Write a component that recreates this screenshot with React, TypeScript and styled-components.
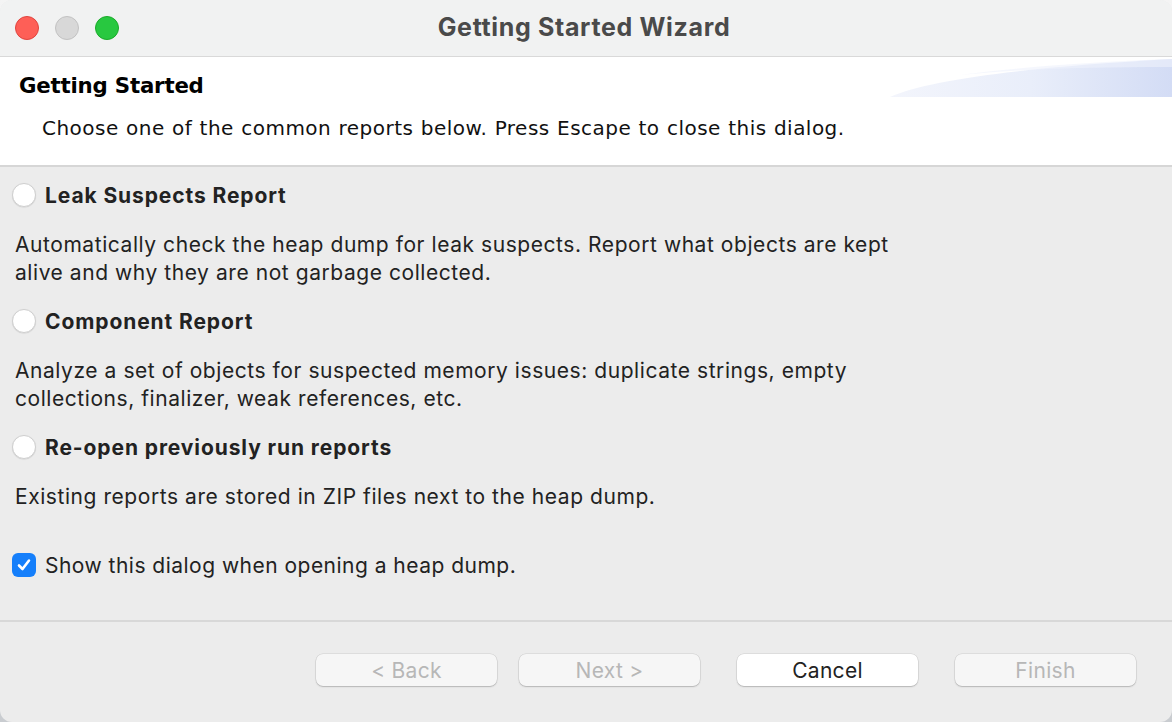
import React from "react";
import styled, { createGlobalStyle } from "styled-components";

const Global = createGlobalStyle`
  html, body { margin: 0; padding: 0; }
  body {
    width: 1172px; height: 722px; overflow: hidden;
    background: linear-gradient(180deg, #f4f4f4 0%, #c9ccd0 100%);
    font-family: Inter, "Open Sans", sans-serif;
  }
`;

const Window = styled.div`
  width: 1172px; height: 722px; box-sizing: border-box;
  border-radius: 12px; overflow: hidden;
  background: #ececec;
  display: flex; flex-direction: column;
`;

const TitleBar = styled.div`
  height: 57px; flex: none; position: relative; box-sizing: border-box;
  background: #f1f2f2; border-bottom: 1px solid #d9d9d9;
  display: flex; align-items: center; justify-content: center;
`;

const Lights = styled.div`
  position: absolute; left: 15px; top: 16px;
  display: flex; gap: 16px;
`;

const Light = styled.span<{ $c: string; $b: string }>`
  width: 24px; height: 24px; border-radius: 50%; box-sizing: border-box;
  background: ${p => p.$c}; border: 1px solid ${p => p.$b};
`;

const Title = styled.div`
  font-size: 25px; font-weight: 700; color: #4a4a4a; letter-spacing: 0.65px;
  margin-top: -2px; margin-left: -4px;
`;

const Header = styled.div`
  height: 110px; flex: none; position: relative; background: #fff;
  border-bottom: 2px solid #d6d6d6; box-sizing: border-box;
  padding: 15px 0 0 19px;
`;

const Banner = styled.svg`
  position: absolute; right: 0; top: 0;
`;

const HeaderTitle = styled.div`
  font-family: "DejaVu Sans", sans-serif; font-weight: 700;
  font-size: 21.3px; color: #000; line-height: 28px; letter-spacing: -0.2px;
`;

const HeaderDesc = styled.div`
  margin: 16px 0 0 23px; font-family: "DejaVu Sans", sans-serif;
  font-size: 20px; color: #111; line-height: 24px; letter-spacing: 0.48px;
  word-spacing: 0.5px;
`;

const Body = styled.div`
  flex: 1; padding: 13px 0 0 12px; display: flex; flex-direction: column;
`;

const Option = styled.label`
  display: flex; align-items: center; gap: 9px; height: 30px;
  font-size: 21px; font-weight: 700; color: #222; letter-spacing: 0.9px;
`;

const Radio = styled.span`
  width: 24px; height: 24px; border-radius: 50%; box-sizing: border-box;
  background: #fff; border: 1px solid #cfcfcf;
  box-shadow: 0 0.5px 1px rgba(0,0,0,0.12);
`;

const Desc = styled.p`
  margin: 21px 0 19px 3px; font-size: 21px; line-height: 28px; color: #222;
  letter-spacing: 0.56px; max-width: 900px;
`;

const Check = styled.span`
  width: 24px; height: 24px; border-radius: 6px; background: #157ffb;
  display: flex; align-items: center; justify-content: center;
`;

const CheckRow = styled.label`
  display: flex; align-items: center; gap: 9px; height: 30px; margin-top: 20px;
  font-size: 21px; color: #222; letter-spacing: 0.48px;
`;

const Footer = styled.div`
  height: 102px; flex: none; border-top: 2px solid #d8d8d8;
  display: flex; align-items: flex-start; padding: 32px 0 0 316px; box-sizing: border-box;
`;

const Button = styled.button<{ $enabled?: boolean; $gap: number }>`
  width: 181px; height: 32px; margin-right: ${p => p.$gap}px;
  border-radius: 7px; border: none;
  background: ${p => (p.$enabled ? "#ffffff" : "#f6f6f6")};
  box-shadow: 0 0 0 0.5px rgba(0,0,0,0.12), 0 1px 1.5px rgba(0,0,0,0.18);
  color: ${p => (p.$enabled ? "#222" : "#b7b7b7")};
  font-family: Inter, "Open Sans", sans-serif; font-size: 21px; padding: 0;
  letter-spacing: 0.3px;
`;

export default function App() {
  return (
    <>
      <Global />
      <Window>
        <TitleBar>
          <Lights>
            <Light $c="#fe5f57" $b="#e0443e" />
            <Light $c="#d8d8d8" $b="#c2c2c2" />
            <Light $c="#28c840" $b="#1aab29" />
          </Lights>
          <Title>Getting Started Wizard</Title>
        </TitleBar>
        <Header>
          <Banner width="282" height="40" viewBox="0 0 282 40">
            <defs>
              <linearGradient id="bg" x1="0" x2="1" y1="0" y2="0">
                <stop offset="0" stopColor="#f3f5fc" />
                <stop offset="0.5" stopColor="#e9eefa" />
                <stop offset="1" stopColor="#d3dcf5" />
              </linearGradient>
            </defs>
            <path d="M0 40 C40 22 140 10 282 2 L282 40 Z" fill="url(#bg)" />
            <path d="M70 18 C130 12 200 10 282 10 L282 2 C200 5 130 10 70 18 Z" fill="#eef2fb" opacity="0.6" />
          </Banner>
          <HeaderTitle>Getting Started</HeaderTitle>
          <HeaderDesc>Choose one of the common reports below. Press Escape to close this dialog.</HeaderDesc>
        </Header>
        <Body>
          <Option><Radio />Leak Suspects Report</Option>
          <Desc>Automatically check the heap dump for leak suspects. Report what objects are kept alive and why they are not garbage collected.</Desc>
          <Option><Radio />Component Report</Option>
          <Desc>Analyze a set of objects for suspected memory issues: duplicate strings, empty collections, finalizer, weak references, etc.</Desc>
          <Option><Radio />Re-open previously run reports</Option>
          <Desc>Existing reports are stored in ZIP files next to the heap dump.</Desc>
          <CheckRow>
            <Check>
              <svg width="16" height="16" viewBox="0 0 16 16">
                <path d="M3 8.5 L6.5 12 L13 3.5" fill="none" stroke="#fff" strokeWidth="2.6" strokeLinecap="round" strokeLinejoin="round" />
              </svg>
            </Check>
            Show this dialog when opening a heap dump.
          </CheckRow>
        </Body>
        <Footer>
          <Button $gap={22}>&lt; Back</Button>
          <Button $gap={37}>Next &gt;</Button>
          <Button $enabled $gap={37}>Cancel</Button>
          <Button $gap={0}>Finish</Button>
        </Footer>
      </Window>
    </>
  );
}
